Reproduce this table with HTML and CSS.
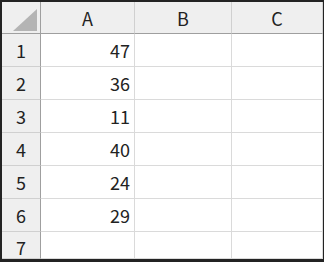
FILE: index.html
```html
<!DOCTYPE html>
<html>
<head>
<meta charset="utf-8">
<link rel="stylesheet" href="styles.css">
</head>
<body>
<div class="sheet">
  <div class="corner hd"><span class="tri"></span></div>
  <div class="colh hd">A</div>
  <div class="colh hd">B</div>
  <div class="colh hd">C</div>

  <div class="rowh">1</div><div class="cell num">47</div><div class="cell"></div><div class="cell"></div>
  <div class="rowh">2</div><div class="cell num">36</div><div class="cell"></div><div class="cell"></div>
  <div class="rowh">3</div><div class="cell num">11</div><div class="cell"></div><div class="cell"></div>
  <div class="rowh">4</div><div class="cell num">40</div><div class="cell"></div><div class="cell"></div>
  <div class="rowh">5</div><div class="cell num">24</div><div class="cell"></div><div class="cell"></div>
  <div class="rowh">6</div><div class="cell num">29</div><div class="cell"></div><div class="cell"></div>
  <div class="rowh last">7</div><div class="cell num"></div><div class="cell"></div><div class="cell"></div>
</div>
</body>
</html>
```
FILE: styles.css
```css
html, body {
  margin: 0;
  padding: 0;
}
body {
  background: #232323;
  width: 324px;
  height: 262px;
  padding: 2px;
  box-sizing: border-box;
  overflow: hidden;
  font-family: "Noto Sans CJK JP", "Noto Sans", sans-serif;
}
.sheet {
  width: 320px;
  height: 257px;
  background: #fff;
  display: grid;
  grid-template-columns: 39px 94px 97px 91px;
  grid-template-rows: 32px repeat(6, 33px) 27px;
}
.sheet > div {
  box-sizing: border-box;
  font-size: 18px;
  line-height: 18px;
  color: #222;
  display: flex;
  align-items: center;
}
.hd {
  background: #efefef;
  border-bottom: 1px solid #9f9f9f;
}
.colh {
  justify-content: center;
  border-right: 1px solid #d0d0d0;
}
.corner {
  border-right: 1px solid #9f9f9f;
  position: relative;
}
.tri {
  position: absolute;
  left: 11px;
  top: 7px;
  width: 0;
  height: 0;
  border-left: 24px solid transparent;
  border-bottom: 22px solid #b4b4b4;
}
.rowh {
  background: #efefef;
  justify-content: center;
  border-right: 1px solid #9f9f9f;
  border-bottom: 1px solid #d0d0d0;
}
.rowh.last {
  align-items: flex-start;
  padding-top: 6px;
}
.cell {
  border-right: 1px solid #dadada;
  border-bottom: 1px solid #dadada;
}
.num {
  justify-content: flex-end;
  padding-right: 4px;
}
```
